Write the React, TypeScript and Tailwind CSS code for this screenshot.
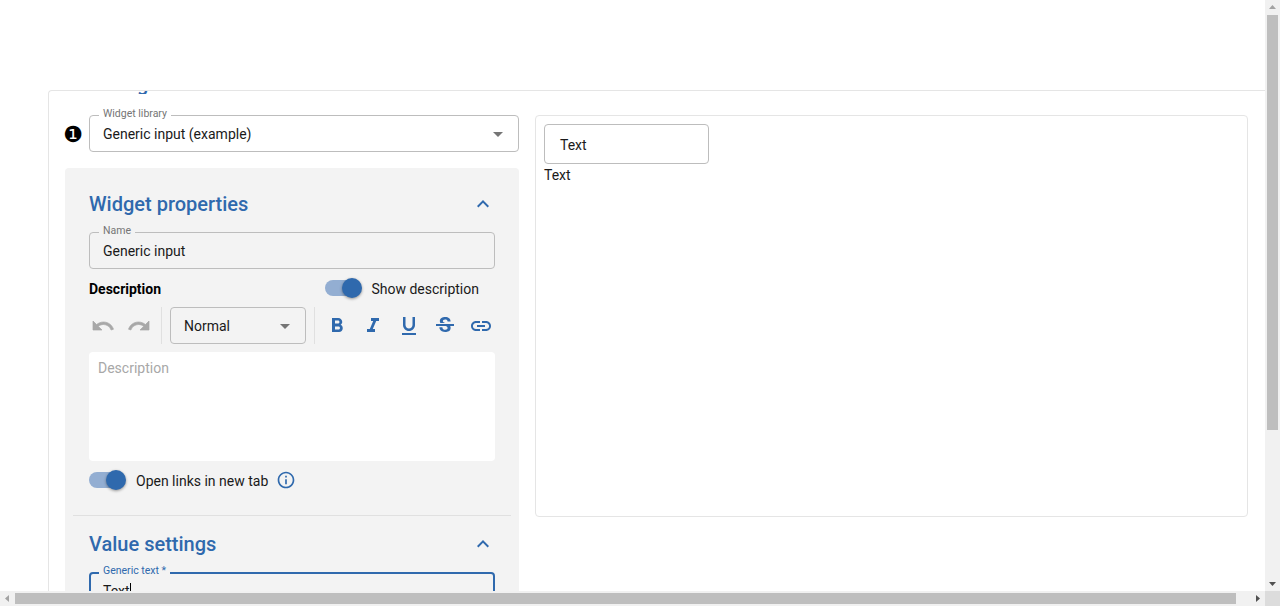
import type { ReactNode } from 'react'
import {
  MdArrowDropDown,
  MdExpandLess,
  MdFormatBold,
  MdFormatItalic,
  MdFormatUnderlined,
  MdInfoOutline,
  MdLink,
  MdStrikethroughS,
} from 'react-icons/md'

const font = { fontFamily: 'Roboto, sans-serif' }

function OutlinedField({
  label,
  labelBg,
  bg,
  children,
  icon,
}: {
  label: string
  labelBg: string
  bg: string
  children: ReactNode
  icon?: boolean
}) {
  return (
    <div className={`relative flex h-[37px] items-center justify-between rounded border border-[#bdbdbd] pl-[13px] pr-2 text-[14px] text-[#1a1a1a] ${bg}`}>
      <span className={`absolute -top-[9px] left-[9px] px-1 text-[10.5px] leading-[14px] text-[#757575] ${labelBg}`}>{label}</span>
      <span className="pt-[2px]">{children}</span>
      {icon && <MdArrowDropDown className="h-6 w-6 text-[#757575]" />}
    </div>
  )
}

function Toggle() {
  return (
    <div className="relative h-5 w-[37px] shrink-0">
      <div className="absolute left-0 top-[2px] h-[16px] w-[34px] rounded-full bg-[#93aed2]" />
      <div className="absolute right-0 top-0 h-5 w-5 rounded-full bg-[#2f69ad] shadow-[0_1px_3px_rgba(0,0,0,0.4)]" />
    </div>
  )
}

function SectionHeading({ title }: { title: string }) {
  return (
    <div className="flex h-6 items-center justify-between">
      <h2 className="text-[20px] font-medium leading-6 text-[#2f69ad]">{title}</h2>
      <MdExpandLess className="h-6 w-6 text-[#2f69ad]" />
    </div>
  )
}

function ToolButton({ children }: { children: ReactNode }) {
  return <div className="flex h-[37px] w-9 shrink-0 items-center justify-center">{children}</div>
}

function UndoIcon() {
  return (
    <svg viewBox="0 0 24 24" className="h-6 w-6 fill-[#a8a8a8] stroke-[#a8a8a8] stroke-[0.7]">
      <path d="M12.5 8c-2.65 0-5.05.99-6.9 2.6L2 7v9h9l-3.62-3.62c1.39-1.16 3.16-1.88 5.12-1.88 3.54 0 6.55 2.31 7.6 5.5l2.37-.78C21.08 11.03 17.15 8 12.5 8z" />
    </svg>
  )
}

function RedoIcon() {
  return (
    <svg viewBox="0 0 24 24" className="h-6 w-6 fill-[#a8a8a8] stroke-[#a8a8a8] stroke-[0.7]">
      <path d="M18.4 10.6C16.55 8.99 14.15 8 11.5 8c-4.65 0-8.58 3.03-9.96 7.22L3.9 16c1.05-3.19 4.05-5.5 7.6-5.5 1.95 0 3.73.72 5.12 1.88L13 16h9V7l-3.6 3.6z" />
    </svg>
  )
}

function Toolbar() {
  const blue = 'h-6 w-6 text-[#2f69ad]'
  return (
    <div className="-ml-1 mt-[9px] flex h-[37px] w-[414px] items-center">
      <ToolButton><UndoIcon /></ToolButton>
      <ToolButton><RedoIcon /></ToolButton>
      <div className="ml-1 h-[37px] w-px shrink-0 bg-[#e0e0e0]" />
      <div className="ml-2 flex h-[37px] w-[136px] shrink-0 items-center justify-between rounded border border-[#bdbdbd] pl-[13px] pr-2 text-[14px] text-[#1a1a1a]">
        <span className="pt-[2px]">Normal</span>
        <MdArrowDropDown className="h-6 w-6 text-[#757575]" />
      </div>
      <div className="ml-2 h-[37px] w-px shrink-0 bg-[#e0e0e0]" />
      <div className="ml-1 flex shrink-0">
        <ToolButton><MdFormatBold className={blue} /></ToolButton>
        <ToolButton><MdFormatItalic className={blue} /></ToolButton>
        <ToolButton><MdFormatUnderlined className={blue} /></ToolButton>
        <ToolButton><MdStrikethroughS className={blue} /></ToolButton>
        <ToolButton><MdLink className={blue} /></ToolButton>
      </div>
    </div>
  )
}

function WidgetPanel() {
  return (
    <div className="mt-4 h-[500px] rounded-t bg-[#f3f3f3] pt-6">
      <div className="px-6">
        <SectionHeading title="Widget properties" />
        <div className="mt-4">
          <OutlinedField label="Name" labelBg="bg-[#f3f3f3]" bg="">Generic input</OutlinedField>
        </div>
        <div className="mt-[9px] flex h-5 items-center justify-between pr-4">
          <span className="pt-[2px] text-[14px] font-bold text-black">Description</span>
          <div className="flex items-center gap-[9px] text-[14px] text-[#1a1a1a]">
            <Toggle />
            <span className="pt-[2px]">Show description</span>
          </div>
        </div>
        <Toolbar />
        <div className="mt-2 h-[109px] rounded bg-white px-[9px] py-[6px] text-[14px] leading-5 text-[#a8a8a8]">Description</div>
        <div className="mt-[9px] flex h-5 items-center text-[14px] text-[#1a1a1a]">
          <Toggle />
          <span className="ml-[10px] pt-[2px]">Open links in new tab</span>
          <MdInfoOutline className="ml-2 h-5 w-5 text-[#2f69ad]" />
        </div>
      </div>
      <div className="mx-2 mt-[25px] h-px bg-[#e0e0e0]" />
      <div className="px-6 pt-4">
        <SectionHeading title="Value settings" />
        <div className="relative mt-4 h-10 rounded border-2 border-[#2f69ad] pl-[12px] pt-[7px] text-[14px] leading-5 text-[#1a1a1a]">
          <span className="absolute -top-[10px] left-2 bg-[#f3f3f3] px-1 text-[10.5px] leading-[14px] text-[#2f69ad]">Generic text *</span>
          <span className="border-r border-black">Text</span>
        </div>
      </div>
    </div>
  )
}

function Preview() {
  return (
    <div className="h-[402px] w-[713px] shrink-0 rounded border border-[#e5e5e5] p-2 text-[14px] leading-5 text-[#1a1a1a]">
      <div className="flex h-10 w-[165px] items-center rounded border border-[#bdbdbd] pl-[15px] pt-[2px]">Text</div>
      <div className="mt-px">Text</div>
    </div>
  )
}

function ScrollTrack() {
  return (
    <div className="flex w-[15px] shrink-0 flex-col items-center bg-[#f1f1f1]">
      <svg viewBox="0 0 15 15" className="h-[15px] w-[15px] shrink-0 fill-[#a3a3a3]"><path d="M7.5 5 11 9H4z" /></svg>
      <div className="h-[415px] w-[11px] bg-[#bebebe]" />
      <div className="flex-1" />
      <svg viewBox="0 0 15 15" className="h-[15px] w-[15px] shrink-0 fill-[#505050]"><path d="M4 6h7l-3.5 4z" /></svg>
    </div>
  )
}

function BottomTrack() {
  return (
    <div className="flex h-[15px] shrink-0 items-center bg-[#f1f1f1]">
      <svg viewBox="0 0 15 15" className="h-[15px] w-[15px] shrink-0 fill-[#a3a3a3]"><path d="M5 7.5 9 4v7z" /></svg>
      <div className="h-[11px] w-[1221px] bg-[#bebebe]" />
      <div className="flex-1" />
      <svg viewBox="0 0 15 15" className="h-[15px] w-[15px] shrink-0 fill-[#505050]"><path d="M6 4l4 3.5L6 11z" /></svg>
      <div className="h-[15px] w-[15px] bg-[#dcdcdc]" />
    </div>
  )
}

export default function App() {
  return (
    <div className="flex h-[606px] w-[1280px] flex-col overflow-hidden bg-white" style={font}>
      <div className="flex min-h-0 flex-1">
        <main className="min-w-0 flex-1 overflow-hidden pl-12 pt-[90px]">
          <div className="rounded-tl border-l border-t border-[#e5e5e5] pl-4 pr-[17px]">
            {/* heading scrolled under the toolbar, only the descender stays visible */}
            <div className="h-[3px] overflow-hidden pl-[38px]">
              <div className="-mt-[19px] text-[20px] font-medium leading-6 text-[#2f69ad]">Widget</div>
            </div>
            <div className="flex gap-4 pt-[21px]">
              <div className="w-[454px] shrink-0">
                <div className="flex items-center gap-2">
                  <div className="flex h-4 w-4 shrink-0 items-center justify-center pt-[2px] text-[22px] leading-none text-black" style={{ fontFamily: '"DejaVu Sans", sans-serif' }}>❶</div>
                  <div className="flex-1">
                    <OutlinedField label="Widget library" labelBg="bg-white" bg="bg-white" icon>Generic input (example)</OutlinedField>
                  </div>
                </div>
                <WidgetPanel />
              </div>
              <Preview />
            </div>
          </div>
        </main>
        <ScrollTrack />
      </div>
      <BottomTrack />
    </div>
  )
}
